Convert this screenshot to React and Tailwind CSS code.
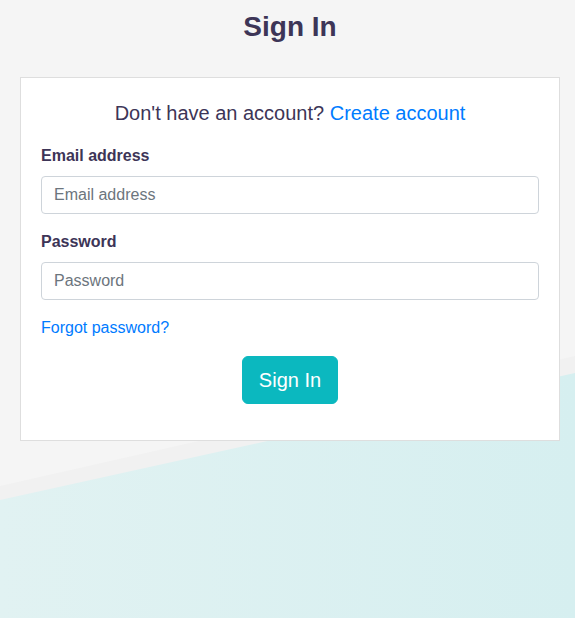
export default function App() {
  return (
    <div className="relative min-h-screen overflow-hidden bg-[#f5f5f5] font-['Liberation_Sans',Arial,sans-serif] text-[#3d3557]">
      {/* background wave */}
      <svg className="absolute inset-0 h-full w-full" viewBox="0 0 575 618" preserveAspectRatio="none">
        <defs>
          <linearGradient id="teal" x1="0" y1="0" x2="1" y2="0">
            <stop offset="0" stopColor="#e1f2f2" />
            <stop offset="1" stopColor="#d6eff0" />
          </linearGradient>
        </defs>
        <polygon points="0,486 575,356 575,618 0,618" fill="#f1f1f1" />
        <polygon points="0,500 575,373 575,618 0,618" fill="url(#teal)" />
      </svg>

      <div className="relative pl-5 pr-[15px] pt-[10px]">
        <h1 className="mb-[33px] text-center text-[28px] font-bold leading-[1.2]">Sign In</h1>

        <div className="border border-[#dedede] bg-white p-5">
          <p className="mb-4 text-center text-[20px] leading-[30px]">
            Don't have an account? <a href="#" className="text-[#007bff]">Create account</a>
          </p>

          <div className="mb-4">
            <label className="mb-2 block text-base font-bold leading-6">Email address</label>
            <input
              type="email"
              placeholder="Email address"
              className="block h-[38px] w-full rounded border border-[#ced4da] px-3 text-base text-[#495057] outline-none placeholder:text-[#6c757d]"
            />
          </div>

          <div className="mb-4">
            <label className="mb-2 block text-base font-bold leading-6">Password</label>
            <input
              type="password"
              placeholder="Password"
              className="block h-[38px] w-full rounded border border-[#ced4da] px-3 text-base text-[#495057] outline-none placeholder:text-[#6c757d]"
            />
          </div>

          <div className="mb-4">
            <a href="#" className="text-base leading-6 text-[#007bff]">Forgot password?</a>
          </div>

          <div className="mb-4 flex justify-center">
            <button className="rounded-md border border-[#0bb8bf] bg-[#0bb8bf] px-4 py-2 text-[20px] leading-[30px] text-white">
              Sign In
            </button>
          </div>
        </div>
      </div>
    </div>
  );
}
